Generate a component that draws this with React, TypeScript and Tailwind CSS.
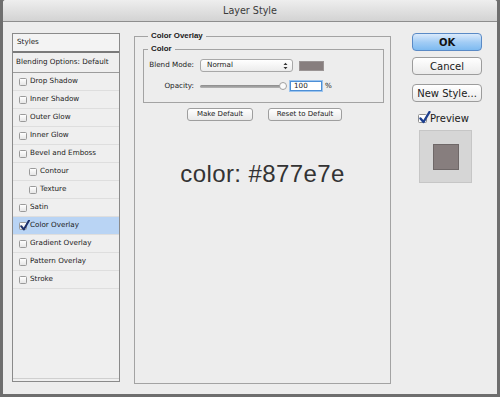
import React from "react";

const SANS = "font-['DejaVu_Sans','Liberation_Sans',sans-serif]";

function Box({ checked = false }: { checked?: boolean }) {
  return (
    <span className="relative inline-block w-[8px] h-[8px] shrink-0 rounded-[1.5px] border border-[#9a9a9a] bg-gradient-to-b from-[#ffffff] to-[#e6e6e6]">
      {checked && (
        <svg className="absolute left-[0px] top-[-3px]" width="10" height="11" viewBox="0 0 10 11">
          <path d="M1.2 6.2 L3.8 9.4 L9 0.6" fill="none" stroke="#1b2f6b" strokeWidth="2" strokeLinecap="round" strokeLinejoin="round" />
        </svg>
      )}
    </span>
  );
}

const items: { label: string; indent?: boolean; checked?: boolean }[] = [
  { label: "Drop Shadow" },
  { label: "Inner Shadow" },
  { label: "Outer Glow" },
  { label: "Inner Glow" },
  { label: "Bevel and Emboss" },
  { label: "Contour", indent: true },
  { label: "Texture", indent: true },
  { label: "Satin" },
  { label: "Color Overlay", checked: true },
  { label: "Gradient Overlay" },
  { label: "Pattern Overlay" },
  { label: "Stroke" },
];

export default function App() {
  return (
    <div className="w-[500px] h-[397px] bg-[#6e6e6e] px-[3px] pb-[3px] overflow-hidden">
      <div className="h-full flex flex-col bg-[#ededed] rounded-t-[3px] overflow-hidden">
        {/* Title bar */}
        <div className="h-[22px] shrink-0 flex items-center justify-center bg-gradient-to-b from-[#eeeeee] to-[#d3d3d3] border-b border-[#8e8e8e]">
          <span className={`${SANS} text-[9.6px] text-[#3a3a3a] leading-none`}>Layer Style</span>
        </div>

        {/* Body */}
        <div className={`flex-1 flex items-start pl-[9px] ${SANS} text-[#1a1a1a]`}>
          {/* Left list */}
          <div className="mt-[11px] w-[108px] h-[349px] border border-[#8a8a8a] bg-[#efefef] flex flex-col text-[7.2px]">
            <div className="h-[19px] shrink-0 flex items-center pl-[4px] border-b-2 border-[#7a7a7a] bg-[#f3f3f3]">Styles</div>
            <div className="h-[20px] shrink-0 flex items-center pl-[3px] border-b border-[#9c9c9c]">Blending Options: Default</div>
            {items.map((it) => (
              <div
                key={it.label}
                className={`h-[18px] shrink-0 flex items-center gap-[2px] border-b border-[#dedede] ${it.indent ? "pl-[16px]" : "pl-[6px]"} ${it.checked ? "bg-[#b9d4f4]" : ""}`}
              >
                <Box checked={it.checked} />
                <span className="ml-[1px]">{it.label}</span>
              </div>
            ))}
            <div className="flex-1 border-b border-[#cfcfcf] mb-[2px]" />
          </div>

          {/* Center panel */}
          <fieldset className="ml-[14px] mt-[9px] w-[257px] h-[353px] border border-[#a3a3a3] px-0 pb-0">
            <legend className="ml-[13px] px-[3px] leading-[10px] text-[7.9px] font-bold font-['Liberation_Sans',sans-serif]">Color Overlay</legend>
            <fieldset className="ml-[8px] mt-[3px] w-[241px] h-[59px] border border-[#a3a3a3] px-0 pb-0">
              <legend className="ml-[4px] px-[3px] leading-[10px] text-[7.9px] font-bold font-['Liberation_Sans',sans-serif]">Color</legend>
              <div className="mt-[5px] h-[13px] flex items-center text-[7.2px]">
                <span className="w-[50px] text-right">Blend Mode:</span>
                <div className="ml-[6px] w-[93px] h-[13px] rounded-[3px] border border-[#a8a8a8] bg-gradient-to-b from-[#ffffff] to-[#ececec] flex items-center pl-[6px] pr-[4px] justify-between">
                  <span>Normal</span>
                  <svg width="5" height="8" viewBox="0 0 5 8">
                    <path d="M0.5 3 L2.5 0.8 L4.5 3 Z M0.5 5 L2.5 7.2 L4.5 5 Z" fill="#333" />
                  </svg>
                </div>
                <div className="ml-[6px] w-[25px] h-[10px] bg-[#877e7e] border border-[#9a9494]" />
              </div>
              <div className="mt-[9px] h-[10px] flex items-center text-[7.2px]">
                <span className="w-[50px] text-right">Opacity:</span>
                <div className="relative ml-[6px] w-[82px] h-[3px] rounded-full bg-gradient-to-b from-[#8a8a8a] to-[#b5b5b5]">
                  <div className="absolute right-[-5px] top-[-3px] w-[8px] h-[8px] rounded-full border border-[#a0a0a0] bg-[#fafafa]" />
                </div>
                <div className="ml-[8px] w-[32px] h-[10px] bg-white border border-[#4d8fd6] shadow-[0_0_0_1px_#9cc4ee] flex items-center pl-[3px] leading-none">100</div>
                <span className="ml-[3px]">%</span>
              </div>
            </fieldset>
            <div className="mt-[5px] flex justify-center gap-[15px] pl-[4px] text-[7px]">
              <div className="w-[66px] h-[13px] rounded-[3px] border border-[#9e9e9e] bg-gradient-to-b from-[#ffffff] to-[#e9e9e9] flex items-center justify-center">Make Default</div>
              <div className="w-[74px] h-[13px] rounded-[3px] border border-[#9e9e9e] bg-gradient-to-b from-[#ffffff] to-[#e9e9e9] flex items-center justify-center">Reset to Default</div>
            </div>
            <div className="mt-[39px] h-[28px] flex items-center justify-center text-[24px] tracking-[0.4px] text-[#333] font-['Liberation_Sans',sans-serif] leading-none">
              color: #877e7e
            </div>
          </fieldset>

          {/* Right column */}
          <div className="ml-[21px] mt-[11px] w-[70px] flex flex-col text-[10px]">
            <div className="h-[18px] rounded-[4px] border border-[#5a8ac6] bg-gradient-to-b from-[#dbeafb] via-[#a3cdf5] to-[#7dbaf0] flex items-center justify-center text-[#111] font-semibold">OK</div>
            <div className="mt-[6px] h-[18px] rounded-[4px] border border-[#9c9c9c] bg-gradient-to-b from-[#ffffff] to-[#ebebeb] flex items-center justify-center">Cancel</div>
            <div className="mt-[9px] h-[18px] rounded-[4px] border border-[#9c9c9c] bg-gradient-to-b from-[#ffffff] to-[#ebebeb] flex items-center justify-center">New Style...</div>
            <div className="mt-[10px] h-[12px] flex items-center pl-[6px] gap-[3px]">
              <span className="relative inline-block w-[9px] h-[9px] rounded-[1.5px] border border-[#8e8e8e] bg-white">
                <svg className="absolute left-[0px] top-[-4px]" width="12" height="13" viewBox="0 0 12 13">
                  <path d="M1.5 7.5 L4.5 11 L10.5 1" fill="none" stroke="#1d3f8f" strokeWidth="2.4" strokeLinecap="round" strokeLinejoin="round" />
                </svg>
              </span>
              <span>Preview</span>
            </div>
            <div className="mt-[6px] ml-[7px] w-[53px] h-[53px] bg-[#d6d6d6] border border-[#c6c6c6] flex items-center justify-center">
              <div className="w-[26px] h-[26px] bg-[#877e7e] border border-[#6f6868]" />
            </div>
          </div>
        </div>
      </div>
    </div>
  );
}
